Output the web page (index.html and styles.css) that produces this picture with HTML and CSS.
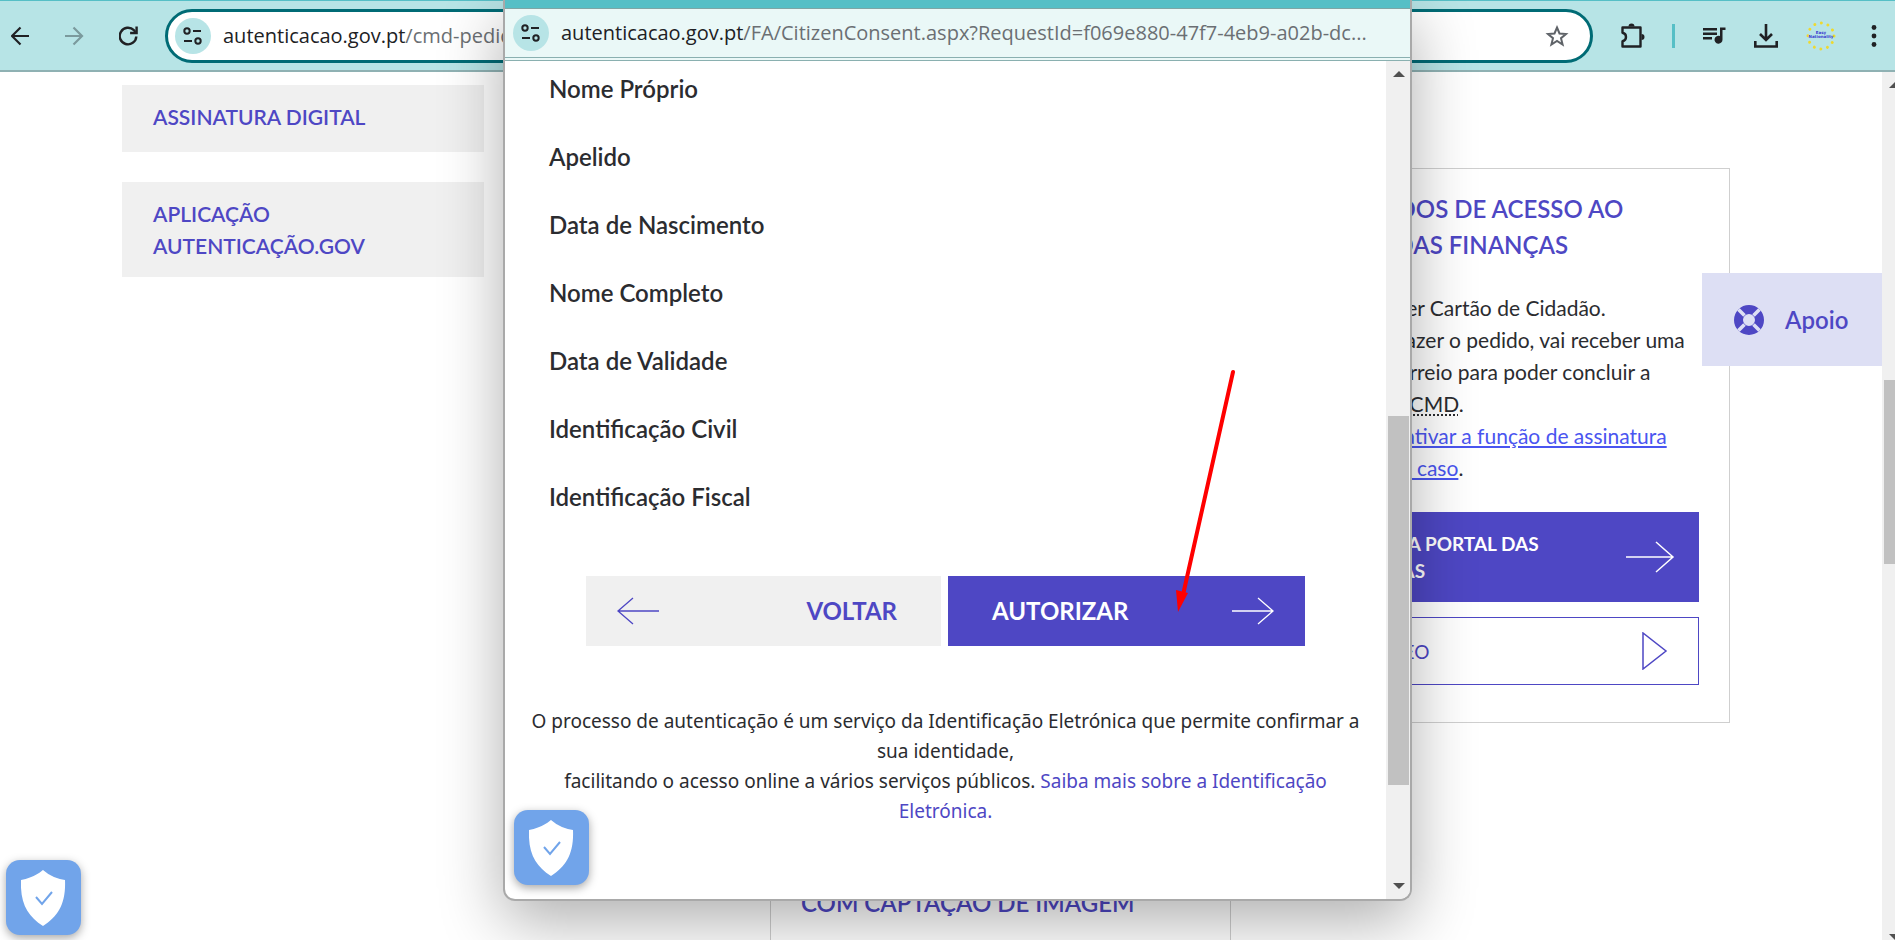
FILE: index.html
```html
<!DOCTYPE html>
<html lang="pt">
<head>
<meta charset="utf-8">
<title>Autenticação.gov</title>
<link rel="stylesheet" href="styles.css">
</head>
<body>
<div class="desktop">
  <header class="toolbar">
    <nav class="nav-buttons">
      <button class="icon-btn" aria-label="Voltar atrás"><svg viewBox="0 0 20 20" width="20" height="20" fill="none" stroke="#202124" stroke-width="2.2"><path d="M18 10H1.500M9.500 1.500 1 10l8.500 8.500"/></svg></button>
      <button class="icon-btn" aria-label="Avançar"><svg viewBox="0 0 20 20" width="20" height="20" fill="none" stroke="#7b9a9d" stroke-width="2.200"><path d="M0 10h16.500M8.500 1.500 17 10l-8.500 8.500"/></svg></button>
      <button class="icon-btn" aria-label="Recarregar"><svg viewBox="0 0 20 20" width="20" height="20" fill="none" stroke="#202124" stroke-width="2.400"><path d="M17.300 10.500a8.300 8.300 0 1 1-2.400-6.300l1.600 1.800"/><path d="M17.600 0.500V7h-6.500"/></svg></button>
    </nav>
    <div class="address">
      <button class="site-info" aria-label="Informações do site"><svg viewBox="0 0 20 18" width="20" height="18" fill="none" stroke="#202124" stroke-width="2"><circle cx="4" cy="4" r="2.700"/><path d="M10 4h8M1 14h8"/><circle cx="15" cy="14" r="2.700"/></svg></button>
      <div class="url"><span class="url-host">autenticacao.gov.pt</span>/cmd-pedido-chave</div>
      <button class="icon-btn star" aria-label="Favorito"><svg viewBox="0 0 24 24" width="24" height="24" fill="none" stroke="#5f6368" stroke-width="2"><path d="M12 3.500l2.500 6 6.500.500-5 4.200 1.600 6.300L12 17l-5.600 3.500L8 14.200 3 10l6.500-.500z"/></svg></button>
    </div>
    <div class="actions">
      <button class="icon-btn" aria-label="Extensões"><svg viewBox="0 0 26 26" width="26" height="26" fill="none" stroke="#202124" stroke-width="2.400"><path d="M3.500 4.500h18v19h-18v-5.300q3.500-.700 3.500-4.200t-3.500-4.200z" stroke-linejoin="round"/><path d="M9.500 3.500a3 3 0 0 1 6 0zM22.500 11a3 3 0 0 1 0 6z" fill="#202124" stroke="none"/></svg></button>
      <span class="divider"></span>
      <button class="icon-btn" aria-label="Multimédia"><svg viewBox="0 0 24 20" width="24" height="20" fill="#202124"><path d="M1 2h14v2.400H1zM1 6.500h14v2.400H1zM1 11h9v2.400H1zM18 1.500h5.500v2.400h-3v9.600a4 4 0 1 1-2.500-3.500z"/></svg></button>
      <button class="icon-btn" aria-label="Transferências"><svg viewBox="0 0 26 26" width="26" height="26" fill="none" stroke="#202124" stroke-width="2.600"><path d="M13 1v16M7 11l6 6 6-6M2.300 18v5.500h21.400V18"/></svg></button>
      <button class="icon-btn profile" aria-label="Perfil Easy Nationality"><svg viewBox="0 0 30 30" width="30" height="30"><circle cx="15" cy="15" r="13" fill="none" stroke="#eed930" stroke-width="3" stroke-linecap="round" stroke-dasharray="0.010 6.797"/><text class="badge-text" x="15" y="13">Easy</text><text class="badge-text" x="15" y="17">Nationality</text></svg></button>
      <button class="icon-btn" aria-label="Menu"><svg viewBox="0 0 6 24" width="6" height="24" fill="#202124"><circle cx="3" cy="3.500" r="2.400"/><circle cx="3" cy="12" r="2.400"/><circle cx="3" cy="20.500" r="2.400"/></svg></button>
    </div>
  </header>

  <div class="viewport">
    <main class="page">
      <nav class="side-menu">
        <a href="#">Assinatura Digital</a>
        <a href="#">Aplicação Autenticação.gov</a>
      </nav>
      <section class="cards">
        <article class="card card-access">
          <h2>Com dados de acesso ao Portal das Finanças</h2>
          <p>Só precisa ter Cartão de Cidadão.<br>Depois de fazer o pedido, vai receber uma<br>carta por correio para poder concluir a<br>ativação da <abbr title="Chave Móvel Digital">CMD</abbr>.<br><a href="#">Não podes ativar a função de assinatura<br>digital neste caso</a>.</p>
          <button class="cta cta-solid"><span>Pedir via Portal das Finanças</span><svg viewBox="0 0 50 34" width="50" height="34" fill="none" stroke="#fff" stroke-width="1.500"><path d="M1 17h47M31 2l17 15-17 15"/></svg></button>
          <button class="cta cta-line"><span>Ver vídeo</span><svg viewBox="0 0 26 38" width="26" height="38" fill="none" stroke="#4e47c4" stroke-width="1.500"><path d="M1 1v36l23-18z"/></svg></button>
        </article>
        <article class="card card-image">
          <h2>Ativação online<br>do Cartão<br>com captação de imagem</h2>
        </article>
      </section>
    </main>
    <div class="scrollbar scrollbar-page"><span class="arrow-up"></span><span class="thumb"></span><span class="arrow-down"></span></div>
    <button class="support"><svg viewBox="0 0 30 30" width="30" height="30"><circle cx="15" cy="15" r="10.500" fill="none" stroke="#4e47c4" stroke-width="9"/><path d="M4.500 4.500l6 6M25.500 4.500l-6 6M4.500 25.500l6-6M25.500 25.500l-6-6" stroke="#dddff4" stroke-width="3.600"/></svg><span>Apoio</span></button>
    <button class="shield" aria-label="Privacidade"><svg viewBox="0 0 46 56" width="46" height="56"><path d="M22 0q9 8 22 10c1 24-7 36-22 46C7 46-1 34 0 10 13 8 22 0 22 0z" fill="#fff"/><path d="M15 27l6 7 10-12" fill="none" stroke="#71a4ea" stroke-width="2"/></svg></button>
  </div>

  <section class="popup" aria-label="Consentimento">
    <div class="popup-title"></div>
    <div class="popup-bar">
      <button class="site-info" aria-label="Informações do site"><svg viewBox="0 0 20 18" width="20" height="18" fill="none" stroke="#202124" stroke-width="2"><circle cx="4" cy="4" r="2.700"/><path d="M10 4h8M1 14h8"/><circle cx="15" cy="14" r="2.700"/></svg></button>
      <div class="url"><span class="url-host">autenticacao.gov.pt</span>/FA/CitizenConsent.aspx?RequestId=f069e880-47f7-4eb9-a02b-dc...</div>
    </div>
    <div class="popup-body">
      <div class="consent">
        <ul>
          <li>Nome Próprio</li>
          <li>Apelido</li>
          <li>Data de Nascimento</li>
          <li>Nome Completo</li>
          <li>Data de Validade</li>
          <li>Identificação Civil</li>
          <li>Identificação Fiscal</li>
        </ul>
        <div class="choices">
          <button class="choice choice-back"><svg viewBox="0 0 44 28" width="44" height="28" fill="none" stroke="#4e47c4" stroke-width="1.300"><path d="M43 14H2M17 1L2 14l15 13"/></svg><span>Voltar</span></button>
          <button class="choice choice-ok"><span>Autorizar</span><svg viewBox="0 0 44 28" width="44" height="28" fill="none" stroke="#fff" stroke-width="1.300"><path d="M1 14h41M27 1l15 13-15 13"/></svg></button>
        </div>
        <p class="note">O processo de autenticação é um serviço da Identificação Eletrónica que permite confirmar a<br>sua identidade,<br>facilitando o acesso online a vários serviços públicos. <a href="#">Saiba mais sobre a Identificação<br>Eletrónica.</a></p>
      </div>
      <div class="scrollbar scrollbar-popup"><span class="arrow-up"></span><span class="thumb"></span><span class="arrow-down"></span></div>
      <button class="shield" aria-label="Privacidade"><svg viewBox="0 0 46 56" width="46" height="56"><path d="M22 0q9 8 22 10c1 24-7 36-22 46C7 46-1 34 0 10 13 8 22 0 22 0z" fill="#fff"/><path d="M15 27l6 7 10-12" fill="none" stroke="#71a4ea" stroke-width="2"/></svg></button>
    </div>
    <svg class="pointer" viewBox="0 0 60 244" width="60" height="244"><path d="M57 3L7 226" stroke="#f00" stroke-width="4" stroke-linecap="round"/><path d="M0 221l12 3-10 19z" fill="#f00"/></svg>
  </section>
</div>
</body>
</html>
```

FILE: styles.css
```css
* { box-sizing: border-box; }
body { margin: 0; font-family: Lato, "Open Sans", sans-serif; color: #2b2c30; background: #fff; }
button { border: 0; padding: 0; margin: 0; background: none; font: inherit; color: inherit; cursor: pointer; }
svg { display: block; flex: none; }
a { color: #4e47c4; text-decoration: none; }

.desktop { position: relative; height: 100vh; overflow: hidden; display: flex; flex-direction: column; }

.toolbar { flex: none; height: 72px; display: flex; align-items: center; padding-right: 18px; background: #b7e4e6; border-top: 1px solid #56bfc6; border-bottom: 2px solid #8fb1b3; }
.nav-buttons { display: flex; width: 165px; gap: 34px; padding-left: 11px; }
.icon-btn { display: flex; align-items: center; justify-content: center; flex: none; }
.nav-buttons .icon-btn { width: 20px; }
.address { flex: 1; height: 54px; display: flex; align-items: center; padding: 0 21px 0 7px; background: #fff; border: 3px solid #006b75; border-radius: 27px; }
.site-info { width: 36px; height: 36px; border-radius: 18px; background: #b7e4e6; display: flex; align-items: center; justify-content: center; flex: none; }
.url { flex: 1; margin-left: 12px; font: 20px/28px "Open Sans", sans-serif; color: #6b6f73; white-space: nowrap; overflow: hidden; }
.url-host { color: #202124; }
.actions { display: flex; align-items: center; padding-left: 26px; gap: 27px; }
.profile { margin-right: 8px; }
.divider { width: 3px; height: 24px; background: #56bfc6; }
.badge-text { font: bold 4px "DejaVu Sans", sans-serif; fill: #3b3bd0; text-anchor: middle; }

.viewport { position: relative; flex: 1; min-height: 0; display: flex; }
.page { flex: 1; min-width: 0; display: flex; justify-content: space-between; padding: 13px 152px 0 122px; overflow: hidden; }
.side-menu { width: 362px; display: flex; flex-direction: column; gap: 30px; }
.side-menu a { background: #f0f0f0; padding: 16px 31px 15px; font-size: 21px; line-height: 32px; font-weight: 600; text-transform: uppercase; }
.side-menu a:first-child { padding-bottom: 19px; }
.cards { display: grid; grid-template-columns: 461px 461px; column-gap: 38px; row-gap: 67px; align-content: start; padding-top: 83px; }
.card { border: 1px solid #cfcfcf; padding: 22px 30px 37px; display: flex; flex-direction: column; }
.card-access { grid-column: 2; }
.card-image { grid-column: 1; min-height: 300px; }
.card h2 { margin: 0; font-size: 24px; line-height: 36px; font-weight: 600; color: #4e47c4; text-transform: uppercase; }
.card p { margin: 29px 0 28px; font-size: 21px; line-height: 32px; white-space: nowrap; }
.card p a { color: #4a55f0; text-decoration: underline; }
.cta { display: flex; align-items: center; justify-content: space-between; text-align: left; text-transform: uppercase; font-size: 19px; line-height: 27px; padding: 0 24px 0 30px; }
.cta-solid { height: 90px; background: #4e47c4; color: #fff; font-weight: 700; }
.cta-solid span { width: 220px; }
.cta-line { height: 68px; margin-top: 15px; border: 1px solid #4e47c4; color: #4e47c4; padding-right: 30px; }

.support { position: absolute; right: 13px; top: 201px; width: 180px; height: 93px; background: #dddff4; color: #4e47c4; display: flex; align-items: center; gap: 21px; padding-left: 32px; font-size: 24px; line-height: 36px; font-weight: 600; }
.shield { position: absolute; left: 6px; bottom: 5px; width: 75px; height: 75px; border-radius: 14px; background: #71a4ea; box-shadow: 0 3px 10px rgba(0, 0, 0, 0.35); display: flex; align-items: center; justify-content: center; }

.scrollbar { flex: none; display: flex; flex-direction: column; background: #f0f0f0; overflow: hidden; }
.thumb { background: #c1c1c1; }
.arrow-up, .arrow-down { border: 6px solid transparent; width: 12px; height: 6px; align-self: center; }
.arrow-up { border-top: 0; border-bottom-color: #505050; }
.arrow-down { border-bottom: 0; border-top-color: #505050; margin-top: auto; }
.scrollbar-page { width: 13px; padding: 10px 0 0 2px; }
.scrollbar-page .arrow-up, .scrollbar-page .arrow-down { align-self: flex-start; margin-left: 5px; }
.scrollbar-page .thumb { height: 184px; margin-top: 292px; }
.scrollbar-popup { width: 24px; padding: 10px 1px 10px 2px; }
.scrollbar-popup .thumb { height: 369px; margin-top: 339px; }

.popup { position: absolute; left: 503px; top: 0; width: 909px; height: 901px; display: flex; flex-direction: column; background: #fff; border: 2px solid #a9a9a9; border-top: 0; border-radius: 0 0 12px 12px; box-shadow: 0 20px 64px rgba(0, 0, 0, 0.32); }
.popup-title { height: 9px; background: #56bfc6; border-bottom: 1px solid #7fa5a5; }
.popup-bar { height: 52px; display: flex; align-items: center; padding: 0 24px 0 8px; background: #eaf8f7; border-bottom: 4px double #8ab0b0; }
.popup-body { position: relative; flex: 1; min-height: 0; display: flex; overflow: hidden; border-radius: 0 0 10px 10px; }
.popup-body .shield { left: 9px; bottom: 14px; }
.consent { flex: 1; min-width: 0; padding-top: 10px; }
.consent ul { list-style: none; margin: 0; padding: 0 44px; display: flex; flex-direction: column; gap: 32px; font-size: 24px; line-height: 36px; font-weight: 600; }
.choices { display: flex; gap: 7px; padding: 0 81px; margin-top: 61px; }
.choice { height: 70px; display: flex; align-items: center; justify-content: space-between; font-size: 24px; line-height: 36px; font-weight: 700; text-transform: uppercase; }
.choice-back { flex: 0 0 355px; background: #f0f0f0; color: #4e47c4; padding: 0 44px 0 30px; }
.choice-ok { flex: 1; background: #4e47c4; color: #fff; padding: 0 30px 0 44px; }
.note { margin: 60px 0 0; text-align: center; font: 19px/30px "Noto Sans", sans-serif; white-space: nowrap; }
.pointer { position: absolute; left: 671px; top: 369px; }
```
